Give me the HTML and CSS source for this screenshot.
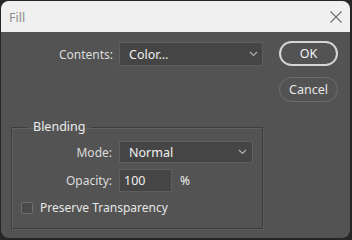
FILE: index.html
```html
<!DOCTYPE html>
<html>
<head>
<meta charset="utf-8">
<link rel="stylesheet" href="styles.css">
</head>
<body>
<div class="window">
  <div class="titlebar">
    <span class="title">Fill</span>
    <svg class="close" width="12" height="12" viewBox="0 0 12 12"><path d="M0.5 0.5 L11.5 11.5 M11.5 0.5 L0.5 11.5" stroke="#6f6f6f" stroke-width="1.1" fill="none"/></svg>
  </div>
  <div class="content">
    <div class="left">
      <div class="row contents-row">
        <label class="lbl lbl-contents">Contents:</label>
        <div class="select select-contents"><span>Color...</span>
          <svg class="chev" width="9" height="6" viewBox="0 0 9 6"><path d="M1 1 L4.5 4.5 L8 1" stroke="#b0b0b0" stroke-width="1.2" fill="none"/></svg>
        </div>
      </div>
      <fieldset class="blending">
        <legend>Blending</legend>
        <div class="row mode-row">
          <label class="lbl lbl-inner">Mode:</label>
          <div class="select select-mode"><span>Normal</span>
            <svg class="chev" width="9" height="6" viewBox="0 0 9 6"><path d="M1 1 L4.5 4.5 L8 1" stroke="#b0b0b0" stroke-width="1.2" fill="none"/></svg>
          </div>
        </div>
        <div class="row opacity-row">
          <label class="lbl lbl-inner">Opacity:</label>
          <div class="input">100</div>
          <span class="pct">%</span>
        </div>
        <div class="row check-row">
          <span class="checkbox"></span>
          <span class="check-label">Preserve Transparency</span>
        </div>
      </fieldset>
    </div>
    <div class="right">
      <button class="btn btn-ok">OK</button>
      <button class="btn btn-cancel">Cancel</button>
    </div>
  </div>
</div>
</body>
</html>
```
FILE: styles.css
```css
html, body {
  margin: 0;
  padding: 0;
  background: #262626;
  width: 352px;
  height: 240px;
  overflow: hidden;
}
body {
  padding: 1px 2px 2px 1px;
  box-sizing: border-box;
  font-family: "Noto Sans", "Open Sans", sans-serif;
  font-size: 12px;
}
.window {
  width: 349px;
  height: 237px;
  background: #535353;
  border-radius: 8px;
  overflow: hidden;
}
.titlebar {
  height: 31px;
  background: #f0f0f0;
  display: flex;
  align-items: center;
  justify-content: space-between;
  padding: 0 8px 0 8px;
  box-sizing: border-box;
}
.title {
  color: #8c8c8c;
  font-size: 12.5px;
  padding-top: 1px;
}
.close {
  margin-top: 1px;
}
.content {
  display: flex;
  padding: 10px 0 0 10px;
  color: #e2e2e2;
}
.left {
  width: 252px;
  display: flex;
  flex-direction: column;
}
.row {
  display: flex;
  align-items: center;
}
.lbl {
  text-align: right;
  color: #dcdcdc;
}
.lbl-contents {
  width: 102px;
  margin-right: 6px;
}
.select {
  background: #454545;
  border: 1px solid #5e5e5e;
  box-sizing: border-box;
  display: flex;
  align-items: center;
  justify-content: space-between;
  color: #f0f0f0;
}
.select-contents {
  width: 144px;
  height: 24px;
  padding: 0 4px 0 9px;
  font-size: 12.5px;
}
.chev {
  display: block;
}
.blending {
  margin: 54px 0 0 0;
  padding: 0;
  border: 1px solid #3d3d3d;
  box-shadow: inset 1px 1px 0 #606060, 1px 1px 0 #5c5c5c;
  width: 252px;
  height: 109px;
  box-sizing: border-box;
  min-width: 0;
}
.blending legend {
  margin-left: 15px;
  padding: 0 6px;
  color: #ececec;
  font-size: 12.5px;
  line-height: 14px;
}
.mode-row {
  margin-top: 7px;
}
.lbl-inner {
  width: 100px;
  margin-right: 7px;
}
.select-mode {
  width: 134px;
  height: 22px;
  padding: 0 5px 0 9px;
  font-size: 12.5px;
}
.opacity-row {
  margin-top: 6px;
}
.input {
  width: 53px;
  height: 23px;
  box-sizing: border-box;
  background: #454545;
  border: 1px solid #5e5e5e;
  padding: 0 0 0 4px;
  line-height: 21px;
  color: #f0f0f0;
  font-size: 12.5px;
}
.pct {
  margin-left: 8px;
  color: #f0f0f0;
}
.check-row {
  margin-top: 7px;
  padding-left: 9px;
}
.checkbox {
  width: 12px;
  height: 12px;
  box-sizing: border-box;
  border: 1px solid #6e6e6e;
  background: #4a4a4a;
  border-radius: 2px;
}
.check-label {
  margin-left: 7px;
  color: #e6e6e6;
}
.right {
  margin-left: 16px;
  display: flex;
  flex-direction: column;
}
.btn {
  width: 59px;
  height: 25px;
  border-radius: 13px;
  background: #535353;
  font-family: "Noto Sans", "Open Sans", sans-serif;
  font-size: 12.5px;
  padding: 0;
  box-sizing: border-box;
}
.btn-ok {
  border: 2px solid #d6d6d6;
  color: #f2f2f2;
  margin-top: -1px;
}
.btn-cancel {
  border: 1px solid #6e6e6e;
  color: #e6e6e6;
  margin-top: 11px;
}
```
